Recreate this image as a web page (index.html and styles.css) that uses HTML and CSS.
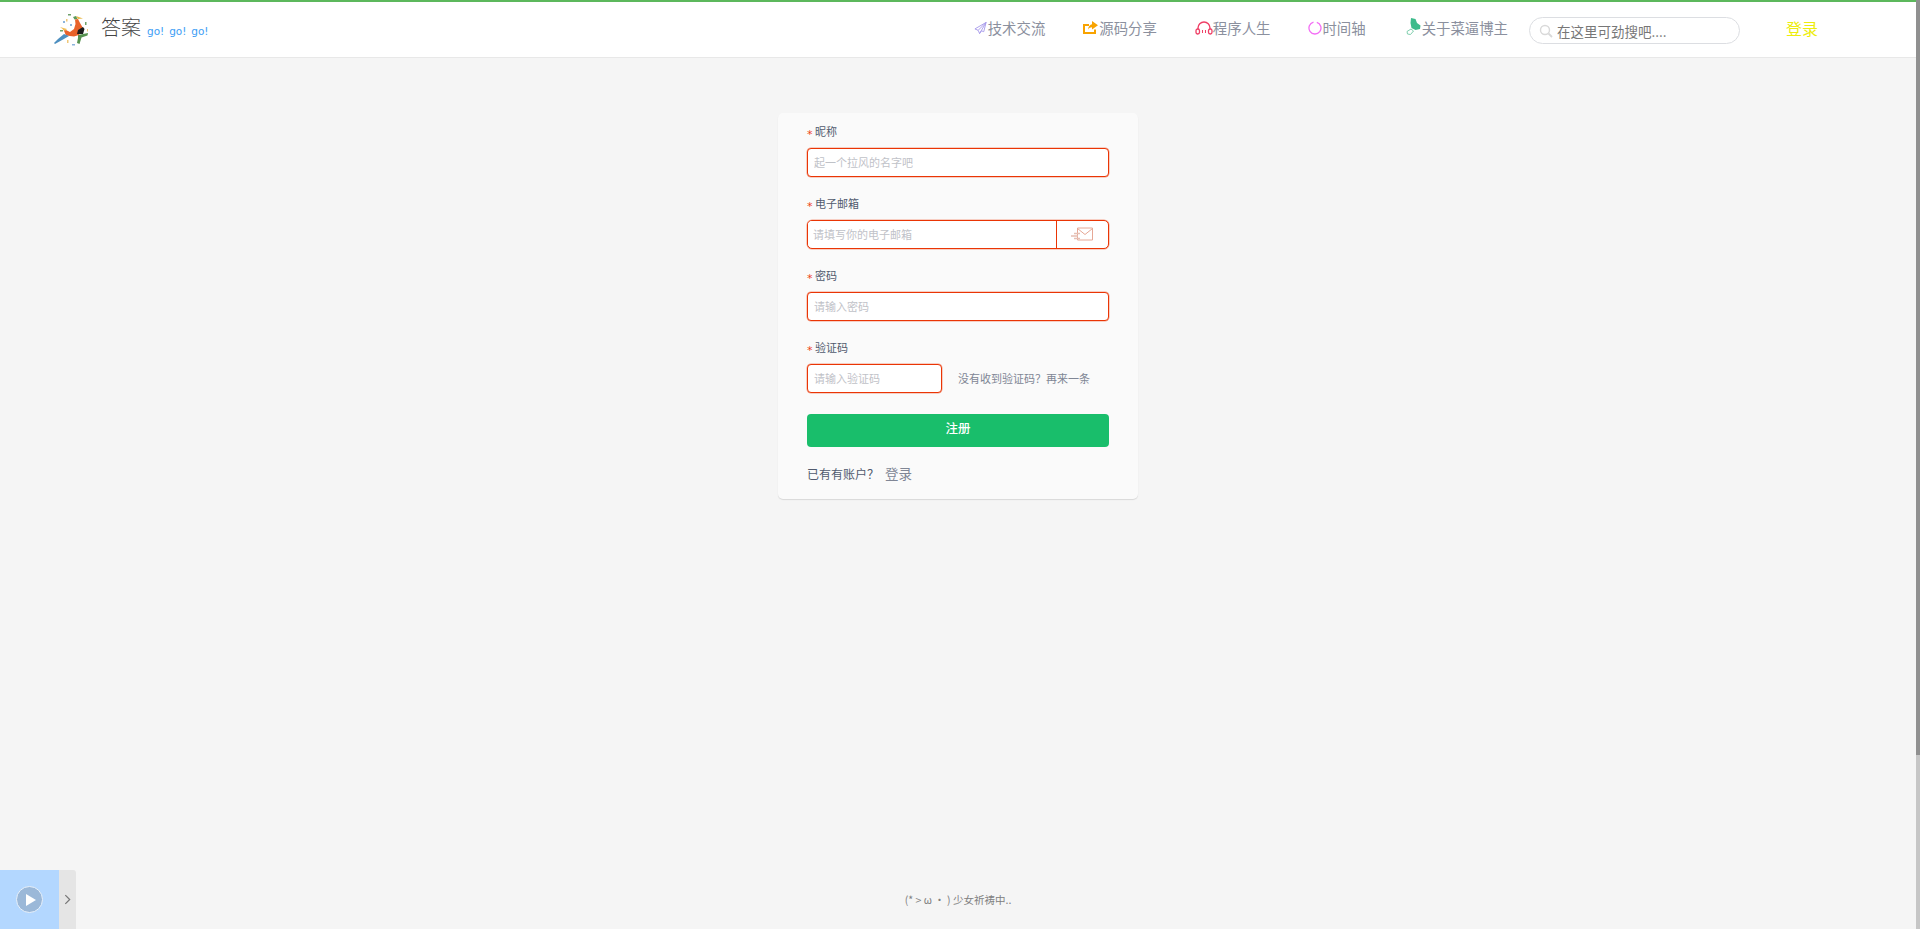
FILE: index.html
```html
<!DOCTYPE html>
<html lang="zh-CN">
<head>
<meta charset="utf-8">
<title>答案</title>
<link rel="stylesheet" href="styles.css">
</head>
<body>
<div class="page">
  <div class="content">
    <header class="header">
      <a class="brand">
        <svg class="logo" viewBox="0 0 34 32" width="34" height="32">
          <path d="M19 3l3-1 1.500 3-3 .5z" fill="#5a9a5a"/>
          <path d="M22 2l7 2.500-5 .5z" fill="#e9b949"/>
          <path d="M21 5.500l3-.5 2 4 3 5-4 7-5 1.500-8-1-3-7 7 3.500 4-3 1.500-5z" fill="#e8622a"/>
          <path d="M23 20l1-4 5-3 1.500 2-1.500 5z" fill="#1d1d1d"/>
          <path d="M10 20l5 2-6 3.500L1 30l-1-1 4-4z" fill="#4d8fc0"/>
          <path d="M24 21l10-2-.5 2.500-6 2-2 6.500-2.500-1 1-5z" fill="#56924f"/>
          <path d="M6 13l7 2-2 2z" fill="#f3c25a"/>
          <g fill="#6fa06a"><rect x="14" y="0" width="3" height="1.500"/><rect x="6" y="16" width="3" height="1.500"/><rect x="31" y="8" width="1.500" height="3"/></g>
          <g fill="#8cb4dc"><rect x="9" y="7" width="2" height="2"/><rect x="18" y="30" width="3" height="1.500"/><rect x="16" y="10" width="2" height="2"/></g>
          <g fill="#f0c878"><rect x="13" y="26" width="1.500" height="3"/><rect x="12" y="5" width="1.500" height="2.500"/><rect x="33" y="15" width="1" height="2.500"/></g>
        </svg>
        <span class="brand-name">答案</span>
        <span class="brand-tag">go! go! go!</span>
      </a>
      <nav class="nav">
        <a class="nav-item">
          <svg class="nav-icon" viewBox="0 0 14 14" width="13" height="14"><path d="M13 1L1 8l3.500 1.500L6 13l2-3 2.500 1zM13 1L4.500 9.500M13 1L6 13" fill="none" stroke="#a79bea" stroke-width="1"/></svg>
          <span>技术交流</span>
        </a>
        <a class="nav-item">
          <svg class="nav-icon" viewBox="0 0 15 14" width="15" height="14"><path d="M0 3h6v2H2v6h9V8.500h2V13H0z" fill="#f8a300"/><path d="M9 0l6 4.200-6 4.200V6.300C7.500 6.300 6 7 5 8.800 5.300 5.500 7 3.400 9 3.200z" fill="#f8a300"/></svg>
          <span>源码分享</span>
        </a>
        <a class="nav-item nav-item-tight">
          <svg class="nav-icon" viewBox="0 0 18 14" width="18" height="14"><path d="M3 8V7a6 6 0 0 1 12 0v1" fill="none" stroke="#ef3f66" stroke-width="1.400"/><rect x="1" y="8" width="3.500" height="5" rx="1.700" fill="none" stroke="#ef3f66" stroke-width="1.300"/><rect x="13.500" y="8" width="3.500" height="5" rx="1.700" fill="none" stroke="#ef3f66" stroke-width="1.300"/><path d="M7.500 9v3M10.500 9v3" stroke="#ef3f66" stroke-width="1"/></svg>
          <span>程序人生</span>
        </a>
        <a class="nav-item nav-item-tight">
          <svg class="nav-icon" viewBox="0 0 14 14" width="14" height="14"><path d="M5.500 1.200A6 6 0 1 0 8.800 1.300" fill="none" stroke="#f36ef5" stroke-width="1.300"/></svg>
          <span>时间轴</span>
        </a>
        <a class="nav-item nav-item-last">
          <svg class="nav-icon nav-icon-leaf" viewBox="0 0 15 18" width="15" height="18"><path d="M5 0l4.500 1 1.500 4 3.500 2.500-.5 3.500-4.500 1-4-2-1-5z" fill="#3dbb8b"/><path d="M5 11l2.500 2-3 3.500-3-.5-.5-2.500z" fill="none" stroke="#7fcfae" stroke-width="1"/></svg>
          <span>关于菜逼博主</span>
        </a>
      </nav>
      <div class="search">
        <svg class="search-icon" viewBox="0 0 14 14" width="14" height="14"><circle cx="6" cy="6" r="4.500" fill="none" stroke="#d9d9d9" stroke-width="1.400"/><path d="M9.500 9.500L13 13" stroke="#d9d9d9" stroke-width="1.800"/></svg>
        <input class="search-input" type="text" placeholder="在这里可劲搜吧....">
      </div>
      <a class="login-link">登录</a>
    </header>

    <main class="main">
      <form class="card">
        <div class="field">
          <label class="label"><i class="star">*</i>昵称</label>
          <input class="input" type="text" placeholder="起一个拉风的名字吧">
        </div>
        <div class="field">
          <label class="label"><i class="star">*</i>电子邮箱</label>
          <div class="input-group">
            <input class="input input-bare" type="text" placeholder="请填写你的电子邮箱">
            <span class="addon">
              <svg viewBox="0 0 22 14" width="22" height="14"><path d="M6.500 1h15v12h-15zM6.500 1.500l7.500 6 7.500-6" fill="none" stroke="#e6a896" stroke-width="1"/><path d="M3 6.500h6M0 9h7M3 11.500h6" stroke="#e6bfb3" stroke-width="1.300"/></svg>
            </span>
          </div>
        </div>
        <div class="field">
          <label class="label"><i class="star">*</i>密码</label>
          <input class="input" type="password" placeholder="请输入密码">
        </div>
        <div class="field field-code">
          <label class="label"><i class="star">*</i>验证码</label>
          <div class="code-row">
            <input class="input input-code" type="text" placeholder="请输入验证码">
            <span class="resend">没有收到验证码&#65311;再来一条</span>
          </div>
        </div>
        <button class="submit" type="button">注册</button>
        <p class="switch">已有有账户&#65311;<a class="switch-link">登录</a></p>
      </form>
    </main>

    <footer class="footer">(* &gt; ω · ) 少女祈祷中..</footer>

    <aside class="player">
      <div class="player-cover">
        <span class="play">
          <svg viewBox="0 0 12 14" width="12" height="14"><path d="M1 1l10 6-10 6z" fill="#fff"/></svg>
        </span>
      </div>
      <div class="player-handle">
        <svg viewBox="0 0 8 12" width="7" height="11"><path d="M1.500 1l5 5-5 5" fill="none" stroke="#777" stroke-width="1.400"/></svg>
      </div>
    </aside>
  </div>
  <div class="scrollbar"><div class="scrollbar-thumb"></div></div>
</div>
</body>
</html>
```
FILE: styles.css
```css
* { box-sizing: border-box; }
html, body { margin: 0; height: 100%; overflow: hidden; }
body {
  font-family: "Noto Sans CJK SC", "Liberation Sans", sans-serif;
  background: #f5f5f5;
  color: #515a6e;
}
.page { display: flex; height: 929px; }
.content { position: relative; flex: 1; min-width: 0; display: flex; flex-direction: column; }
.scrollbar { width: 4px; background: #c6c6c6; }
.scrollbar-thumb { height: 755px; background: #909090; }

.header {
  display: flex;
  align-items: center;
  height: 58px;
  padding: 0 98px 3px 54px;
  background: #fff;
  border-top: 2px solid #5cb85c;
  border-bottom: 1px solid #e8e8e8;
}
.brand { display: flex; align-items: center; }
.logo { display: block; margin-top: 4px; }
.brand-name { margin: -3px 0 0 13px; font-size: 20px; line-height: 28px; color: #444; font-weight: 300; }
.brand-tag { margin: 6px 0 0 6px; font-family: "DejaVu Sans", sans-serif; font-size: 10.500px; color: #3d9ef5; word-spacing: 1.500px; }

.nav { display: flex; align-items: center; gap: 38px; margin-left: auto; }
.nav-item { display: flex; align-items: center; gap: 1px; font-size: 14.400px; line-height: 20px; color: #8b909e; }
.nav-item-tight { gap: 0; }
.nav-item-last { margin-left: 2px; }
.nav-icon { display: block; }
.nav-icon-leaf { margin-top: -3px; }

.search {
  display: flex;
  align-items: center;
  width: 211px;
  height: 27px;
  margin: 5px 0 0 21px;
  padding: 0 10px 0 9px;
  border: 1px solid #dcdee2;
  border-radius: 14px;
  background: #fff;
}
.search-icon { flex: none; }
.search-input {
  flex: 1;
  min-width: 0;
  margin-left: 4px;
  padding: 0;
  border: 0;
  outline: 0;
  background: none;
  font: 400 13.500px "Noto Sans CJK SC", sans-serif;
}
.search-input::placeholder { color: #777; opacity: 1; }
.login-link { margin-left: 46px; font-size: 16px; line-height: 22px; color: #eded0c; }

.main { flex: 1; display: flex; justify-content: center; align-items: flex-start; padding-top: 55px; }
.card {
  width: 360px;
  padding: 10px 29px 15px;
  background: #fafafa;
  border-radius: 5px;
  box-shadow: 0 1px 1px rgba(0, 0, 0, .12);
}
.field { margin-bottom: 18.500px; }
.field-code { margin-bottom: 21px; }
.label { display: block; height: 25px; font-size: 11px; line-height: 17px; color: #515a6e; }
.star {
  display: inline-block;
  width: 8px;
  font-style: normal;
  font-family: "DejaVu Sans", sans-serif;
  font-size: 11px;
  line-height: 10px;
  vertical-align: -2px;
  color: #ed4014;
}

.input {
  display: block;
  width: 100%;
  height: 28.500px;
  padding: 0 6px;
  border: 1px solid #ea3505;
  border-radius: 4px;
  outline: 0;
  background: #fff;
  box-shadow: 0 0 0 .5px rgba(234, 53, 5, .45);
  font: 400 11px "Noto Sans CJK SC", sans-serif;
}
.input::placeholder { color: #bfc2c8; opacity: 1; }
.input-group { display: flex; height: 28.500px; border: 1px solid #ea3505; border-radius: 5px; background: #fff; box-shadow: 0 0 0 .5px rgba(234, 53, 5, .45); }
.input-bare { flex: 1; height: 26px; border: 0; border-radius: 4px 0 0 4px; padding: 0 5px; box-shadow: none; }
.addon { display: flex; align-items: center; justify-content: center; width: 52px; padding-right: 2px; border-left: 1px solid #ea3505; }
.code-row { display: flex; align-items: center; }
.input-code { width: 135px; }
.resend { margin-left: 16px; font-size: 11px; color: #808695; }

.submit {
  display: block;
  width: 100%;
  height: 33px;
  padding: 0 0 5px;
  border: 0;
  border-radius: 4px;
  background: #19be6b;
  color: #fff;
  font: 500 12.500px "Noto Sans CJK SC", sans-serif;
}
.switch { margin: 16px 0 0; font-size: 12px; line-height: 20px; color: #515a6e; }
.switch-link { margin-left: 6px; font-size: 13.500px; color: #808695; }

.footer { height: 58px; padding-top: 21px; text-align: center; font-size: 10.500px; line-height: 16px; color: #808080; }

.player { position: absolute; left: 0; bottom: 0; display: flex; height: 59px; }
.player-cover { display: flex; align-items: center; justify-content: center; width: 59px; background: #b3d7ff; }
.play {
  display: flex;
  align-items: center;
  justify-content: center;
  width: 27px;
  height: 27px;
  padding-left: 2px;
  border: 1px solid #e8f1fb;
  border-radius: 50%;
  background: #9bb8d8;
}
.player-handle { display: flex; align-items: center; justify-content: center; width: 17px; background: #e5e5e5; border-radius: 0 3px 0 0; }
```
